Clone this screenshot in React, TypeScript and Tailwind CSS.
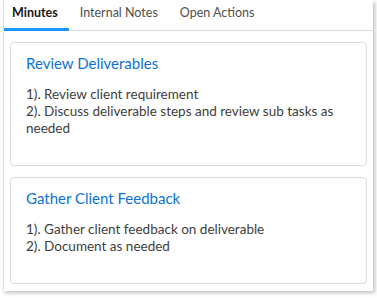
const notes = [
  {
    title: 'Review Deliverables',
    lines: ['1). Review client requirement', '2). Discuss deliverable steps and review sub tasks as needed'],
  },
  {
    title: 'Gather Client Feedback',
    lines: ['1). Gather client feedback on deliverable', '2). Document as needed'],
  },
];

const tabs = ['Minutes', 'Internal Notes', 'Open Actions'];

export default function App() {
  return (
    <div className="w-[377px] h-[298px] bg-white pl-[3px] pr-[4px]" style={{ fontFamily: 'Lato, "Open Sans", sans-serif' }}>
      <div className="h-[291px] bg-white border-l border-[#e5e5e5] shadow-[2px_2px_4px_rgba(0,0,0,0.25)]">
        {/* Tabs */}
        <div className="flex h-[31px] border-b border-[#dddbda] text-[12.5px]">
          {tabs.map((t, i) => (
            <div
              key={t}
              className={
                i === 0
                  ? 'pl-[8px] pr-[11px] pt-[4px] font-bold text-[#181818] border-b-[3px] border-[#1b96ff] -mb-px'
                  : 'px-[11px] pt-[4px] text-[#514f4d]'
              }
            >
              {t}
            </div>
          ))}
        </div>

        {/* Cards */}
        <div className="px-[6px] pt-[11px] flex flex-col gap-[11px]">
          {notes.map((n) => (
            <div key={n.title} className="border border-[#dddbda] rounded-[4px] px-[15px] pt-[9px] pb-[28px]">
              <div className="text-[15px] text-[#0b72d3] leading-[22px]">{n.title}</div>
              <div className="mt-[12px] text-[13.5px] text-[#3e3e3c] leading-[17px]">
                {n.lines.map((l) => (
                  <div key={l}>{l}</div>
                ))}
              </div>
            </div>
          ))}
        </div>
      </div>
    </div>
  );
}
